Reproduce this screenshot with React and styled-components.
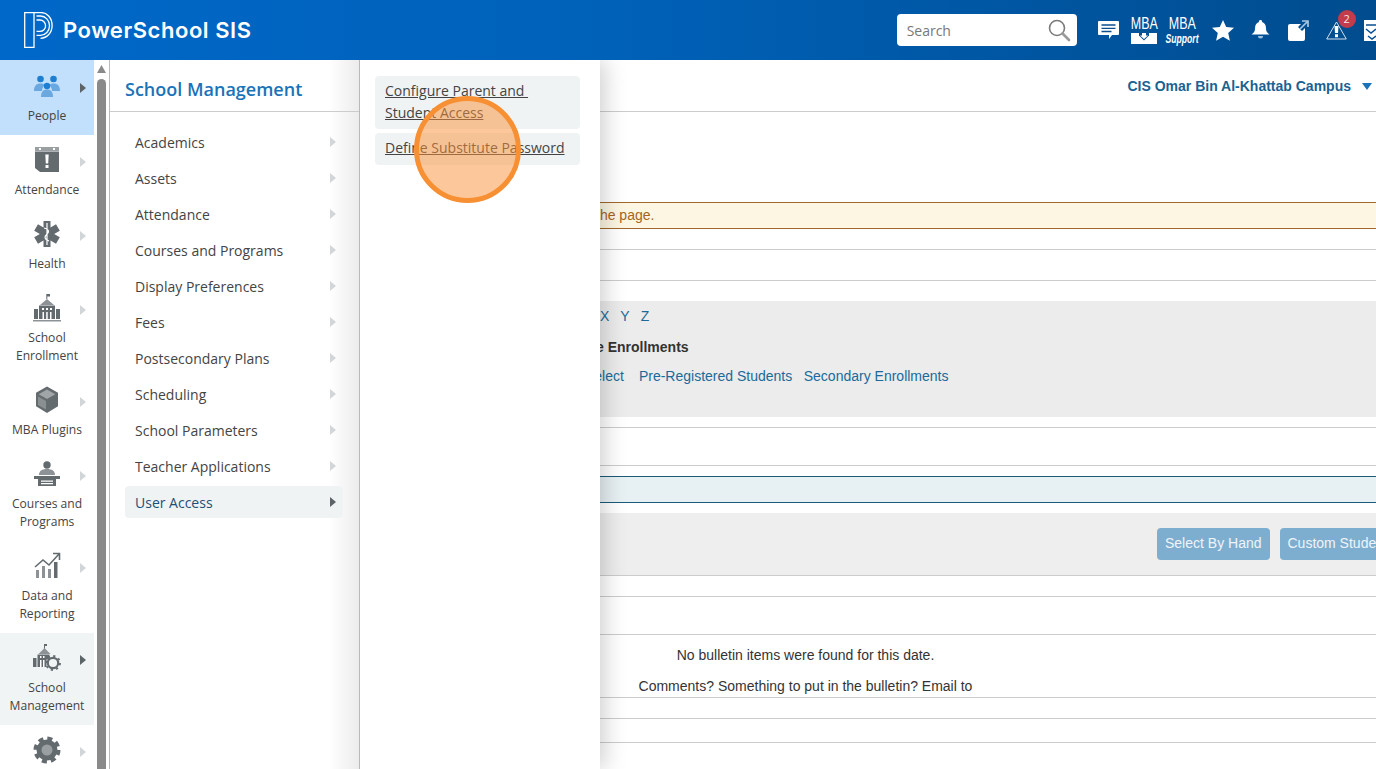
import React from "react";
import styled, { createGlobalStyle } from "styled-components";

const Global = createGlobalStyle`
  html, body { margin: 0; padding: 0; background: #fff; overflow: hidden; }
  * { box-sizing: border-box; }
`;

const Page = styled.div`
  position: relative;
  width: 1376px;
  height: 769px;
  overflow: hidden;
  display: flex;
  flex-direction: column;
  font-family: "Liberation Sans", Arial, sans-serif;
`;

/* ---------- header ---------- */
const Header = styled.header`
  position: relative;
  z-index: 5;
  flex: 0 0 60px;
  display: flex;
  align-items: center;
  padding-left: 24px;
  background: linear-gradient(90deg, #0068c9 0%, #0061b8 45%, #004c8e 100%);
`;
const LogoMark = styled.div`
  flex: none;
  line-height: 0;
`;
const Brand = styled.div`
  flex: 0 0 188px;
  margin-left: 10px;
  font-family: Inter, "Open Sans", sans-serif;
  font-weight: 600;
  font-size: 22px;
  letter-spacing: 0.55px;
  color: #fff;
  white-space: nowrap;
`;
const SearchBox = styled.div`
  margin-left: 645px;
  width: 180px;
  height: 32px;
  flex: none;
  background: #fff;
  border-radius: 4px;
  display: flex;
  align-items: center;
  justify-content: space-between;
  padding: 0 6px 0 10px;
  font-family: "Open Sans", sans-serif;
  font-size: 14px;
  color: #777;
`;
const HeaderIcons = styled.div`
  display: flex;
  align-items: center;
  margin-left: 21px;
  flex: none;
`;
const HeaderSlot = styled.div`
  position: relative;
  width: ${(p) => p.$w}px;
  margin-right: ${(p) => p.$gap}px;
  flex: none;
  display: flex;
  flex-direction: column;
  align-items: center;
  color: #fff;
`;
const MbaText = styled.span`
  display: block;
  font-size: 16px;
  line-height: 14px;
  color: #fff;
  transform: scaleX(0.78);
  white-space: nowrap;
`;
const SupportText = styled.span`
  display: block;
  margin-top: 3px;
  font-size: 12px;
  line-height: 10px;
  font-weight: 700;
  font-style: italic;
  color: #fff;
  transform: scaleX(0.72);
  white-space: nowrap;
`;
const TrayGap = styled.div`
  margin-top: 2px;
  line-height: 0;
`;
const Badge = styled.span`
  position: absolute;
  top: -11px;
  right: -9px;
  width: 18px;
  height: 18px;
  border-radius: 50%;
  background: #c23c4c;
  color: #f3e6e6;
  font-family: "Open Sans", sans-serif;
  font-size: 11px;
  line-height: 18px;
  text-align: center;
`;

/* ---------- body ---------- */
const Body = styled.div`
  flex: 1;
  min-height: 0;
  display: flex;
`;

/* left nav */
const Nav = styled.nav`
  flex: 0 0 94px;
  display: flex;
  flex-direction: column;
  overflow: hidden;
`;
const NavItem = styled.div`
  flex: none;
  padding: ${(p) => (p.$active ? 11 : 10)}px 0 10px;
  background: ${(p) => (p.$active ? "#c2e0fb" : p.$current ? "#f1f4f5" : "transparent")};
  min-height: 74px;
`;
const NavIconRow = styled.div`
  height: 30px;
  display: grid;
  grid-template-columns: 1fr 30px 1fr;
  align-items: center;
`;
const NavIconCell = styled.div`
  grid-column: 2;
  display: flex;
  justify-content: center;
`;
const NavArrow = styled.span`
  justify-self: end;
  margin: 3px 8px 0 0;
  width: 0;
  height: 0;
  border-left: 6px solid ${(p) => (p.$dark ? "#5c6468" : "#d3d6d8")};
  border-top: 5px solid transparent;
  border-bottom: 5px solid transparent;
`;
const NavLabel = styled.div`
  margin-top: 6px;
  font-family: "Open Sans", sans-serif;
  font-size: 12.1px;
  line-height: 18px;
  color: #444;
  text-align: center;
`;

/* scrollbar */
const ScrollTrack = styled.div`
  flex: 0 0 16px;
  min-width: 0;
  padding: 5px 3px 0;
  display: flex;
  flex-direction: column;
  align-items: stretch;
  background: #fff;
  border-right: 1px solid #bbb;
`;
const ScrollUp = styled.span`
  align-self: center;
  flex: none;
  width: 9px;
  height: 8px;
  background: #8a8a8a;
  clip-path: polygon(50% 0, 100% 100%, 0 100%);
`;
const ScrollThumb = styled.div`
  margin-top: 6px;
  flex: 1;
  background: #8a8a8a;
  border-radius: 5px 5px 0 0;
`;

/* first flyout */
const MenuPanel = styled.section`
  flex: 0 0 250px;
  border-right: 1px solid #b9b9b9;
  background: linear-gradient(90deg, #fff 0%, #fff 88%, #ececec 100%);
  display: flex;
  flex-direction: column;
`;
const MenuTitle = styled.h2`
  margin: 0;
  height: 52px;
  padding: 16px 0 0 15px;
  border-bottom: 1px solid #ccc;
  font-family: "Open Sans", sans-serif;
  font-size: 18px;
  line-height: 26px;
  font-weight: 600;
  color: #1a72b8;
`;
const MenuList = styled.div`
  padding: 14px 16px 0 15px;
  display: flex;
  flex-direction: column;
  gap: 4px;
`;
const MenuRow = styled.div`
  height: 32px;
  display: flex;
  align-items: center;
  justify-content: space-between;
  padding: 0 7px 0 10px;
  border-radius: 4px;
  background: ${(p) => (p.$active ? "#f0f3f4" : "transparent")};
  font-family: "Open Sans", sans-serif;
  font-size: 14px;
  color: ${(p) => (p.$active ? "#1f4f77" : "#444")};
`;
const MenuArrow = styled.span`
  width: 0;
  height: 0;
  border-left: 6px solid ${(p) => (p.$dark ? "#5c6468" : "#d3d6d8")};
  border-top: 5px solid transparent;
  border-bottom: 5px solid transparent;
`;

/* second flyout */
const SubPanel = styled.section`
  position: relative;
  z-index: 2;
  flex: 0 0 240px;
  background: #fff;
  padding: 16px 20px 0 15px;
  display: flex;
  flex-direction: column;
  gap: 4px;
  box-shadow: 4px 0 22px rgba(0, 0, 0, 0.2);
  clip-path: inset(0 -60px 0 0);
`;
const SubLink = styled.a`
  display: block;
  min-height: 32px;
  padding: 4px 10px 5px;
  border-radius: 4px;
  background: #f0f3f4;
  font-family: "Open Sans", sans-serif;
  font-size: 14px;
  line-height: 22px;
  color: #444;
  text-decoration: underline;
  white-space: pre-wrap;
`;

/* main page beyond the menus */
const Main = styled.main`
  flex: 1;
  min-width: 0;
  overflow: hidden;
  display: flex;
  flex-direction: column;
  font-size: 14px;
  line-height: 20px;
  color: #333;
`;
const CampusBar = styled.div`
  flex: 0 0 52px;
  border-bottom: 1px solid #ccc;
  padding: 16px 4px 0 0;
  display: flex;
  justify-content: flex-end;
  align-items: flex-start;
  font-weight: 700;
  color: #1a6292;
  gap: 11px;
`;
const CampusCaret = styled.span`
  margin-top: 7px;
  width: 0;
  height: 0;
  border-left: 5px solid transparent;
  border-right: 5px solid transparent;
  border-top: 7px solid #1a72b8;
`;
const Notice = styled.div`
  flex: 0 0 27px;
  margin-top: 90px;
  border-top: 1px solid #a0682a;
  border-bottom: 1px solid #a0682a;
  background: #fdf6e3;
  color: #a5651c;
  line-height: 24px;
  white-space: nowrap;
`;
const Clipped = styled.span`
  display: inline-block;
  margin-left: ${(p) => p.$offset}px;
`;
const Ruled = styled.div`
  flex: 0 0 ${(p) => p.$h}px;
  border-bottom: 1px solid #ccc;
`;
const FilterBox = styled.div`
  flex: 0 0 116px;
  margin-top: 20px;
  padding-top: 5px;
  background: #ececec;
  display: flex;
  flex-direction: column;
`;
const Letters = styled.div`
  display: flex;
  gap: 11px;
  color: #1a6a9a;
`;
const BoldLine = styled.div`
  margin-top: 11px;
  font-weight: 700;
  white-space: nowrap;
`;
const LinkLine = styled.div`
  margin-top: 9px;
  display: flex;
  white-space: nowrap;
  color: #1a6a9a;
`;
const TextLink = styled.span`
  margin-left: ${(p) => p.$left}px;
`;
const InfoBar = styled.div`
  flex: 0 0 27px;
  margin-top: 10px;
  background: #e7f0f3;
  border-top: 1px solid #1b5a78;
  border-bottom: 1px solid #1b5a78;
`;
const ActionBar = styled.div`
  flex: 0 0 63px;
  margin-top: 10px;
  background: #eee;
  border-bottom: 1px solid #ccc;
  padding: 15px 0 0 557px;
  display: flex;
  gap: 10px;
  align-items: flex-start;
`;
const ActionButton = styled.div`
  flex: none;
  height: 32px;
  padding: 0 8px;
  border-radius: 4px;
  background: #7eaecf;
  color: #eef4f8;
  line-height: 30px;
  white-space: nowrap;
`;
const Bulletin = styled.div`
  flex: 0 0 63px;
  width: 100%;
  border-bottom: 1px solid #ccc;
  padding-top: 10px;
  display: flex;
  flex-direction: column;
  gap: 11px;
`;
const BulletinLine = styled.div`
  width: 411px;
  text-align: center;
`;

const Spotlight = styled.div`
  position: absolute;
  z-index: 9;
  left: 414px;
  top: 96px;
  width: 107px;
  height: 107px;
  border-radius: 50%;
  border: 5px solid #f78f33;
  background: rgba(249, 145, 55, 0.5);
`;

/* ---------- drawings ---------- */
const G = "#646b6f";

const Logo = () => (
  <svg width="29" height="36" viewBox="0 0 29 36" fill="none" stroke="#fff" strokeWidth="1.3">
    <path d="M.7.7h9.3v34.6H.7z" />
    <path d="M10 .7h6.500a10.600 13 0 0 1 11.600 13c0 7-5 12.200-11.600 12.700" />
    <path d="M12.500 4h4a9 9.700 0 0 1 0 19.400h-4" />
    <path d="M12.500 8h3.500a5.600 5.700 0 0 1 0 11.400h-3.500" />
  </svg>
);
const Magnifier = () => (
  <svg width="24" height="24" viewBox="0 0 24 24" fill="none" stroke="#7b7b7b">
    <circle cx="10" cy="10" r="7.500" strokeWidth="1.600" />
    <path d="M15.500 15.500L22 22" strokeWidth="2.600" strokeLinecap="round" stroke="#9a9a9a" />
  </svg>
);
const Chat = () => (
  <svg width="21" height="18" viewBox="0 0 21 18">
    <path fill="#fff" d="M1 0h19a1 1 0 0 1 1 1v12a1 1 0 0 1-1 1h-6l-3 4v-4H1a1 1 0 0 1-1-1V1a1 1 0 0 1 1-1z" />
    <path stroke="#0a4f90" strokeWidth="1.300" d="M3.500 4h14M3.500 7.300h14M3.500 10.500h10" />
  </svg>
);
const Tray = () => (
  <svg width="26" height="11" viewBox="0 0 26 11">
    <path fill="#fff" d="M0 0h26v11H0z" />
    <path fill="#0a4f90" d="M8 0h10v2.500l-5 5-5-5z" />
    <path fill="#fff" d="M11 0h4v2.500h2L13 6 9 2.500h2z" />
  </svg>
);
const Star = () => (
  <svg width="22" height="21" viewBox="0 0 22 21">
    <path fill="#fff" d="M11 0l3.200 7 7.800.8-5.800 5.200 1.700 7.700L11 16.800 4.100 20.700 5.800 13 0 7.800 7.800 7z" />
  </svg>
);
const Bell = () => (
  <svg width="19" height="20" viewBox="0 0 19 20">
    <path fill="#fff" d="M9.500 0a1.500 1.500 0 0 1 1.500 2c3 .8 4 3.500 4 6.500 0 3 1.200 4.500 3.500 6H.5c2.300-1.500 3.500-3 3.500-6C4 5.500 5 2.800 8 2a1.500 1.500 0 0 1 1.500-2z" />
    <path fill="#9fc0dc" d="M7 16h5a2.500 2.500 0 0 1-5 0z" />
  </svg>
);
const External = () => (
  <svg width="21" height="21" viewBox="0 0 21 21">
    <path fill="#fff" d="M2 4h11l-3 3 4 4 3-3v11a2 2 0 0 1-2 2H2a2 2 0 0 1-2-2V6a2 2 0 0 1 2-2z" />
    <path fill="none" stroke="#a9c6e0" strokeWidth="1.700" d="M12 9l7-7M14 1h6v6" />
  </svg>
);
const Warning = () => (
  <svg width="21" height="19" viewBox="0 0 21 19">
    <path fill="none" stroke="#cfe0ef" strokeWidth="1" d="M10.500 1L20.300 18H.7z" />
    <path fill="#fff" d="M8.500 5h4L12 12H9zM9 13.200h3v3H9z" />
  </svg>
);
const Inbox = () => (
  <svg width="16" height="21" viewBox="0 0 16 21">
    <path fill="#fff" d="M0 0h16v21H0z" />
    <path stroke="#0a4f90" strokeWidth="1.500" fill="none" d="M2 5h14M2 9l5 4 5-4M4 16l4 3 4-3" />
  </svg>
);

const People = () => (
  <svg width="30" height="30" viewBox="0 0 30 30">
    <circle cx="8.500" cy="8" r="3.300" fill="#1e7fd2" />
    <circle cx="21.500" cy="8" r="3.300" fill="#1e7fd2" />
    <path fill="#6ba8e0" d="M2 20c0-5 2-7.500 6.500-7.500 2 0 3.500.5 4.500 1.500-2 1.500-3 3.500-3 6zM28 20c0-5-2-7.500-6.500-7.500-2 0-3.500.5-4.500 1.500 2 1.500 3 3.500 3 6z" />
    <circle cx="15" cy="15" r="3.200" fill="#1e7fd2" />
    <path fill="#6ba8e0" d="M9 26c0-5 2-7.500 6-7.500s6 2.500 6 7.500z" />
  </svg>
);
const CalendarAlert = () => (
  <svg width="30" height="30" viewBox="0 0 30 30">
    <path fill="#9a9fa2" d="M3 2h24v4H3z" />
    <path fill={G} d="M3 6.500h24V27H8l-5-4z" />
    <path fill="#fff" d="M13.300 9.500h3.400l-.5 9h-2.400zM13.500 20h3v3h-3z" />
    <path fill="#fff" d="M7 3h2v2H7zM21 3h2v2h-2z" />
  </svg>
);
const Medical = () => (
  <svg width="30" height="30" viewBox="0 0 30 30">
    <path fill={G} d="M11.500 2h7v6.500l5.500-3.200 3.800 6.400-5.600 3.300 5.600 3.300-3.800 6.400-5.500-3.200V28h-7v-6.500L6 24.700l-3.800-6.400 5.600-3.300-5.600-3.300L6 5.300l5.500 3.200z" />
    <path fill="none" stroke="#fff" strokeWidth="1.200" d="M15 4v22M12 9c4 1 6 3 3 6s-3 5 2 7" />
  </svg>
);
const SchoolIcon = () => (
  <svg width="30" height="30" viewBox="0 0 30 30">
    <path fill={G} d="M14.300 1h1v5h-1zM15 1h3v2.500h-3z" />
    <path fill="#8d9296" d="M15 6l7 6H8z" />
    <path fill={G} d="M7 12.500h16V26H7zM2 16h4v10H2zM24 16h4v10h-4z" />
    <path fill="#fff" d="M10 15h2v2h-2zM14 15h2v2h-2zM18 15h2v2h-2zM10.500 19h1.500v7h-1.500zM18 19h1.500v7H18zM14.200 19h1.500v7h-1.500z" />
    <path fill="#8d9296" d="M1 27h28v1.500H1z" />
  </svg>
);
const Cube = () => (
  <svg width="30" height="30" viewBox="0 0 30 30">
    <path fill={G} d="M15 1.500L26 7.800v13.400L15 28 4 21.200V7.800z" />
    <path fill="#a0a5a8" d="M15 4.500l8.300 4.800L15 14 6.700 9.300z" />
    <path fill="#8a8f92" d="M6 11.500l8 4.500v8.500l-8-4.500z" />
  </svg>
);
const Lectern = () => (
  <svg width="30" height="30" viewBox="0 0 30 30">
    <circle cx="15" cy="6" r="3.700" fill={G} />
    <path fill="#8d9296" d="M7 16c0-4 3-6 8-6s8 2 8 6z" />
    <path fill={G} d="M2 17h26v3H2zM6 20h18v7H6z" />
    <path fill="#fff" d="M9 21.500h12v1.300H9zM9 24h12v1.300H9z" />
  </svg>
);
const Chart = () => (
  <svg width="30" height="30" viewBox="0 0 30 30">
    <path fill="#8d9296" d="M4 19h3v8H4zM10 15h3v12h-3zM16 18h3v9h-3z" />
    <path fill={G} d="M22 11h3.500v16H22z" />
    <path fill="none" stroke={G} strokeWidth="1.600" d="M3 16l8-7 6 5 10-11M21 2.500h6.500V9" />
  </svg>
);
const SchoolGear = () => (
  <svg width="30" height="30" viewBox="0 0 30 30">
    <path fill={G} d="M12 1h3v2h-2v3h-1z" />
    <path fill="#8d9296" d="M12.500 5l6 6h-12z" />
    <path fill={G} d="M5.500 11.500h12v5h-3V24h-9zM1 15h3.500v9H1z" />
    <path fill="#fff" d="M8 13h1.500v2H8zM11 13h1.500v2H11zM8 17h1.500v7H8zM11 17h1.500v7H11z" />
    <circle cx="21" cy="20" r="5.200" fill="none" stroke={G} strokeWidth="2.200" />
    <circle cx="21" cy="20" r="7" fill="none" stroke={G} strokeWidth="1.800" strokeDasharray="2.200 3.300" />
  </svg>
);
const Gear = () => (
  <svg width="30" height="30" viewBox="0 0 30 30">
    <circle cx="15" cy="15" r="8" fill="#9a9fa2" stroke={G} strokeWidth="5" />
    <circle cx="15" cy="15" r="11.500" fill="none" stroke={G} strokeWidth="4" strokeDasharray="5 4.030" />
  </svg>
);

const navItems = [
  { icon: <People />, label: ["People"], active: true },
  { icon: <CalendarAlert />, label: ["Attendance"] },
  { icon: <Medical />, label: ["Health"] },
  { icon: <SchoolIcon />, label: ["School", "Enrollment"] },
  { icon: <Cube />, label: ["MBA Plugins"] },
  { icon: <Lectern />, label: ["Courses and", "Programs"] },
  { icon: <Chart />, label: ["Data and", "Reporting"] },
  { icon: <SchoolGear />, label: ["School", "Management"], current: true },
  { icon: <Gear />, label: [] },
];

const menuItems = [
  "Academics",
  "Assets",
  "Attendance",
  "Courses and Programs",
  "Display Preferences",
  "Fees",
  "Postsecondary Plans",
  "Scheduling",
  "School Parameters",
  "Teacher Applications",
  "User Access",
];

export default function App() {
  return (
    <Page>
      <Global />
      <Header>
        <LogoMark><Logo /></LogoMark>
        <Brand>PowerSchool SIS</Brand>
        <SearchBox>
          Search
          <Magnifier />
        </SearchBox>
        <HeaderIcons>
          <HeaderSlot $w={21} $gap={12}><Chat /></HeaderSlot>
          <HeaderSlot $w={27} $gap={9}><MbaText>MBA</MbaText><TrayGap><Tray /></TrayGap></HeaderSlot>
          <HeaderSlot $w={31} $gap={14}><MbaText>MBA</MbaText><SupportText>Support</SupportText></HeaderSlot>
          <HeaderSlot $w={22} $gap={17}><Star /></HeaderSlot>
          <HeaderSlot $w={19} $gap={18}><Bell /></HeaderSlot>
          <HeaderSlot $w={21} $gap={17}><External /></HeaderSlot>
          <HeaderSlot $w={21} $gap={17}><Warning /><Badge>2</Badge></HeaderSlot>
          <HeaderSlot $w={16} $gap={0}><Inbox /></HeaderSlot>
        </HeaderIcons>
      </Header>
      <Body>
        <Nav>
          {navItems.map((item, i) => (
            <NavItem key={i} $active={item.active} $current={item.current}>
              <NavIconRow>
                <NavIconCell>{item.icon}</NavIconCell>
                <NavArrow $dark={item.active || item.current} />
              </NavIconRow>
              <NavLabel>
                {item.label.map((l) => (
                  <div key={l}>{l}</div>
                ))}
              </NavLabel>
            </NavItem>
          ))}
        </Nav>
        <ScrollTrack>
          <ScrollUp />
          <ScrollThumb />
        </ScrollTrack>
        <MenuPanel>
          <MenuTitle>School Management</MenuTitle>
          <MenuList>
            {menuItems.map((m, i) => {
              const last = i === menuItems.length - 1;
              return (
                <MenuRow key={m} $active={last}>
                  {m}
                  <MenuArrow $dark={last} />
                </MenuRow>
              );
            })}
          </MenuList>
        </MenuPanel>
        <SubPanel>
          <SubLink>{"Configure Parent and \nStudent Access"}</SubLink>
          <SubLink>Define Substitute Password</SubLink>
        </SubPanel>
        <Main>
          <CampusBar>
            CIS Omar Bin Al-Khattab Campus
            <CampusCaret />
          </CampusBar>
          <Notice><Clipped $offset={-4}>the page.</Clipped></Notice>
          <Ruled $h={21} />
          <Ruled $h={31} />
          <FilterBox>
            <Letters><span>X</span><span>Y</span><span>Z</span></Letters>
            <BoldLine><Clipped $offset={-4}>e Enrollments</Clipped></BoldLine>
            <LinkLine>
              <TextLink $left={-15}>Select</TextLink>
              <TextLink $left={15}>Pre-Registered Students</TextLink>
              <TextLink $left={11.5}>Secondary Enrollments</TextLink>
            </LinkLine>
          </FilterBox>
          <Ruled $h={11} />
          <Ruled $h={38} />
          <InfoBar />
          <ActionBar>
            <ActionButton>Select By Hand</ActionButton>
            <ActionButton>Custom Student</ActionButton>
          </ActionBar>
          <Ruled $h={21} />
          <Ruled $h={38} />
          <Bulletin>
            <BulletinLine>No bulletin items were found for this date.</BulletinLine>
            <BulletinLine>Comments? Something to put in the bulletin? Email to</BulletinLine>
          </Bulletin>
          <Ruled $h={21} />
          <Ruled $h={24} />
        </Main>
      </Body>
      <Spotlight />
    </Page>
  );
}
